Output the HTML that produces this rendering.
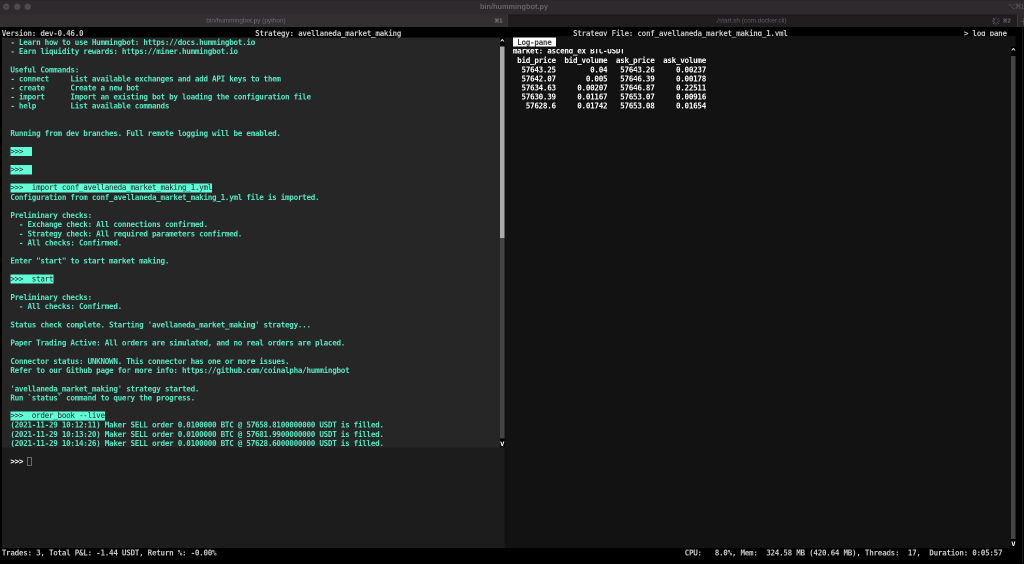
<!DOCTYPE html>
<html lang="en"><head><meta charset="utf-8"><title>bin/hummingbot.py</title>
<style>
html,body{margin:0;padding:0;background:#000;}
body{width:1024px;height:564px;position:relative;overflow:hidden;}
#lay{position:absolute;left:0;top:0;width:2048px;height:1128px;will-change:transform;transform:scale(0.5);transform-origin:0 0;}
.r{position:absolute;}
.t{position:absolute;white-space:pre;font-family:"DejaVu Sans Mono", "Liberation Mono", monospace;font-size:15.2px;line-height:18.23px;height:18.23px;font-weight:bold;letter-spacing:-0.56px;}
.h{color:#c6c6c6;} .o{color:#56e8c3;} .w{color:#ffffff;} .k{color:#262626;font-weight:normal;margin-top:-1px;} .k2{color:#3c3c3c;}
.ui{position:absolute;white-space:pre;font-family:"Liberation Sans","DejaVu Sans",sans-serif;line-height:1.2;}
</style></head>
<body>
<div id="lay">
<div class="r" style="left:0px;top:0px;width:2048px;height:29.2px;background:#2e2a2d;"></div>
<div class="r" style="left:0px;top:0px;width:2048px;height:1px;background:#262326;"></div>
<div class="r" style="left:0px;top:28.6px;width:2048px;height:1.2px;background:#2a262a;"></div>
<div class="r" style="left:0px;top:29.2px;width:1015.4px;height:24.6px;background:#332e32;"></div>
<div class="r" style="left:1015.4px;top:29.2px;width:1019.4px;height:24.6px;background:#201c20;"></div>
<div class="r" style="left:1015.4px;top:28.8px;width:1019.4px;height:1.8px;background:#1a171a;"></div>
<div class="r" style="left:2034.8px;top:29.2px;width:13.2px;height:24.6px;background:#2a262a;"></div>
<div class="r" style="left:1014.6px;top:29.2px;width:1.8px;height:24.6px;background:#3d383d;"></div>
<div class="r" style="left:2034px;top:29.2px;width:1.6px;height:24.6px;background:#3d383d;"></div>
<div class="r" style="left:2040.8px;top:41.8px;width:7.2px;height:1.6px;background:#5e5a60;"></div>
<div class="r" style="left:2045.8px;top:35.8px;width:1.6px;height:13.8px;background:#5e5a60;"></div>
<div class="r" style="left:0px;top:54px;width:2048px;height:1074px;background:#000;"></div>
<div class="r" style="left:6.1px;top:7.3px;width:13.2px;height:13.2px;border-radius:50%;background:#4e4a50"></div>
<div class="r" style="left:27.6px;top:7.3px;width:13.2px;height:13.2px;border-radius:50%;background:#4e4a50"></div>
<div class="r" style="left:49.2px;top:7.3px;width:13.2px;height:13.2px;border-radius:50%;background:#4e4a50"></div>
<div class="r" style="left:11.1px;top:12.3px;width:3.2px;height:3.2px;border-radius:50%;background:#2e2a2d"></div>
<div class="ui" style="left:828px;width:400px;top:5.2px;text-align:center;font-weight:bold;font-size:14.7px;color:#67636a">bin/hummingbot.py</div>
<div class="ui" style="left:292px;width:400px;top:33.2px;text-align:center;font-size:12.8px;color:#6e6a71">bin/hummingbot.py (python)</div>
<div class="ui" style="left:1302px;width:400px;top:33.2px;text-align:center;font-size:12.8px;color:#625e65">./start.sh (com.docker.cli)</div>
<div class="ui" style="left:988.8px;top:35.4px;font-size:10.8px;font-weight:bold;color:#8a868d">&#8984;1</div>
<div class="ui" style="left:2005.6px;top:35.4px;font-size:10.8px;font-weight:bold;color:#726e74">&#8984;2</div>
<div class="ui" style="left:2016px;top:4.8px;font-size:13.2px;letter-spacing:-1.4px;color:#5e5a61">&#8997;&#8984;1</div>
<svg class="r" style="left:1983px;top:33px" width="18" height="18" viewBox="-4.5 -4.5 9 9"><line x1="0" y1="-1.7" x2="0" y2="-4.1" stroke="#8a868c" stroke-width="0.8" stroke-opacity="0.35" transform="rotate(0)"/><line x1="0" y1="-1.7" x2="0" y2="-4.1" stroke="#8a868c" stroke-width="0.8" stroke-opacity="0.42" transform="rotate(45)"/><line x1="0" y1="-1.7" x2="0" y2="-4.1" stroke="#8a868c" stroke-width="0.8" stroke-opacity="0.49" transform="rotate(90)"/><line x1="0" y1="-1.7" x2="0" y2="-4.1" stroke="#8a868c" stroke-width="0.8" stroke-opacity="0.56" transform="rotate(135)"/><line x1="0" y1="-1.7" x2="0" y2="-4.1" stroke="#8a868c" stroke-width="0.8" stroke-opacity="0.63" transform="rotate(180)"/><line x1="0" y1="-1.7" x2="0" y2="-4.1" stroke="#8a868c" stroke-width="0.8" stroke-opacity="0.70" transform="rotate(225)"/><line x1="0" y1="-1.7" x2="0" y2="-4.1" stroke="#8a868c" stroke-width="0.8" stroke-opacity="0.77" transform="rotate(270)"/><line x1="0" y1="-1.7" x2="0" y2="-4.1" stroke="#8a868c" stroke-width="0.8" stroke-opacity="0.84" transform="rotate(315)"/></svg>
<div class="r" style="left:3.5px;top:75.22px;width:996.44px;height:820.26px;background:#262626;"></div>
<div class="r" style="left:3.5px;top:895.48px;width:996.44px;height:200.5px;background:#1c1c1c;"></div>
<div class="r" style="left:1008.52px;top:75.22px;width:1022.22px;height:1020.76px;background:#121212;"></div>
<div class="r" style="left:999.94px;top:75.22px;width:8.58px;height:18.22px;background:#000;"></div>
<div class="r" style="left:999.94px;top:93.46px;width:8.58px;height:382.78px;background:#aaaaaa;"></div>
<div class="r" style="left:999.94px;top:476.24px;width:8.58px;height:401.02px;background:#444444;"></div>
<div class="r" style="left:999.94px;top:877.26px;width:8.58px;height:18.22px;background:#000;"></div>
<div class="r" style="left:999.94px;top:895.48px;width:8.58px;height:200.5px;background:#1c1c1c;"></div>
<div class="r" style="left:2022.14px;top:93.46px;width:8.58px;height:18.22px;background:#000;"></div>
<div class="r" style="left:2022.14px;top:111.68px;width:8.58px;height:966.08px;background:#444444;"></div>
<div class="r" style="left:2022.14px;top:1077.76px;width:8.58px;height:18.22px;background:#000;"></div>
<div class="r" style="left:2030.74px;top:75.22px;width:17.26px;height:1020.76px;background:#000;"></div>
<div class="r" style="left:2044.2px;top:54px;width:1.6px;height:1074px;background:#181818;"></div>
<div class="t w" style="left:999.94px;top:75.82px;">^</div>
<div class="t w" style="left:999.94px;top:877.86px;">v</div>
<div class="t w" style="left:2022.14px;top:94.06px;">^</div>
<div class="t w" style="left:2022.14px;top:1078.36px;">v</div>
<div class="t h" style="left:3.5px;top:57.6px;">Version: dev-0.46.0</div>
<div class="t h" style="left:510.32px;top:57.6px;">Strategy: avellaneda_market_making</div>
<div class="t h" style="left:1145.98px;top:57.6px;">Strategy File: conf_avellaneda_market_making_1.yml</div>
<div class="t h" style="left:1927.66px;top:57.6px;">&gt; log pane</div>
<div class="r" style="left:1112.2px;top:72.4px;width:918.54px;height:3.02px;background:#121212;"></div>
<div class="t h" style="left:3.5px;top:1096.6px;">Trades: 3, Total P&amp;L: -1.44 USDT, Return %: -0.00%</div>
<div class="t h" style="left:1369.3px;top:1096.6px;">CPU:   8.0%, Mem:  324.58 MB (420.64 MB), Threads:  17,  Duration: 0:05:57</div>
<div class="t o" style="left:20.68px;top:75.82px;">- Learn how to use Hummingbot: https://docs.hummingbot.io</div>
<div class="t o" style="left:20.68px;top:94.06px;">- Earn liquidity rewards: https://miner.hummingbot.io</div>
<div class="t o" style="left:20.68px;top:130.52px;">Useful Commands:</div>
<div class="t o" style="left:20.68px;top:148.74px;">- connect     List available exchanges and add API keys to them</div>
<div class="t o" style="left:20.68px;top:166.96px;">- create      Create a new bot</div>
<div class="t o" style="left:20.68px;top:185.2px;">- import      Import an existing bot by loading the configuration file</div>
<div class="t o" style="left:20.68px;top:203.42px;">- help        List available commands</div>
<div class="t o" style="left:20.68px;top:258.1px;">Running from dev branches. Full remote logging will be enabled.</div>
<div class="t o" style="left:20.68px;top:385.7px;">Configuration from conf_avellaneda_market_making_1.yml file is imported.</div>
<div class="t o" style="left:20.68px;top:422.16px;">Preliminary checks:</div>
<div class="t o" style="left:20.68px;top:440.38px;">  - Exchange check: All connections confirmed.</div>
<div class="t o" style="left:20.68px;top:458.62px;">  - Strategy check: All required parameters confirmed.</div>
<div class="t o" style="left:20.68px;top:476.84px;">  - All checks: Confirmed.</div>
<div class="t o" style="left:20.68px;top:513.3px;">Enter "start" to start market making.</div>
<div class="t o" style="left:20.68px;top:586.22px;">Preliminary checks:</div>
<div class="t o" style="left:20.68px;top:604.44px;">  - All checks: Confirmed.</div>
<div class="t o" style="left:20.68px;top:640.9px;">Status check complete. Starting 'avellaneda_market_making' strategy...</div>
<div class="t o" style="left:20.68px;top:677.36px;">Paper Trading Active: All orders are simulated, and no real orders are placed.</div>
<div class="t o" style="left:20.68px;top:713.8px;">Connector status: UNKNOWN. This connector has one or more issues.</div>
<div class="t o" style="left:20.68px;top:732.04px;">Refer to our Github page for more info: https://github.com/coinalpha/hummingbot</div>
<div class="t o" style="left:20.68px;top:768.5px;">'avellaneda_market_making' strategy started.</div>
<div class="t o" style="left:20.68px;top:786.72px;">Run `status` command to query the progress.</div>
<div class="t o" style="left:20.68px;top:841.4px;">(2021-11-29 10:12:11) Maker SELL order 0.0100000 BTC @ 57658.8100000000 USDT is filled.</div>
<div class="t o" style="left:20.68px;top:859.64px;">(2021-11-29 10:13:20) Maker SELL order 0.0100000 BTC @ 57681.9900000000 USDT is filled.</div>
<div class="t o" style="left:20.68px;top:877.86px;">(2021-11-29 10:14:26) Maker SELL order 0.0100000 BTC @ 57628.6000000000 USDT is filled.</div>
<div class="r" style="left:20.68px;top:293.96px;width:42.96px;height:18.22px;background:#5fffd7;"></div>
<div class="t k" style="left:20.68px;top:294.56px;">&gt;&gt;&gt;  </div>
<div class="r" style="left:20.68px;top:330.42px;width:42.96px;height:18.22px;background:#5fffd7;"></div>
<div class="t k" style="left:20.68px;top:331.02px;">&gt;&gt;&gt;  </div>
<div class="r" style="left:20.68px;top:366.88px;width:403.74px;height:18.22px;background:#5fffd7;"></div>
<div class="t k" style="left:20.68px;top:367.48px;">&gt;&gt;&gt;  import conf_avellaneda_market_making_1.yml</div>
<div class="r" style="left:20.68px;top:549.16px;width:85.9px;height:18.22px;background:#5fffd7;"></div>
<div class="t k" style="left:20.68px;top:549.76px;">&gt;&gt;&gt;  start</div>
<div class="r" style="left:20.68px;top:822.58px;width:188.98px;height:18.22px;background:#5fffd7;"></div>
<div class="t k" style="left:20.68px;top:823.18px;">&gt;&gt;&gt;  order_book --live</div>
<div class="t w" style="left:20.68px;top:914.32px;">&gt;&gt;&gt; </div>
<div class="r" style="left:55.24px;top:914.12px;width:8.18px;height:17.42px;box-sizing:border-box;border:1.6px solid #b8b8b8"></div>
<div class="r" style="left:1025.72px;top:75.22px;width:85.9px;height:18.22px;background:#ffffff;"></div>
<div class="t k2" style="left:1025.72px;top:75.82px;"> Log-pane </div>
<div class="t w" style="left:1025.72px;top:94.06px;margin-top:-0.8px">market: ascend_ex BTC-USDT</div>
<div class="r" style="left:1025.72px;top:93.46px;width:257.7px;height:4.2px;background:#121212;"></div>
<div class="t w" style="left:1025.72px;top:112.28px;"> bid_price  bid_volume  ask_price  ask_volume</div>
<div class="t w" style="left:1025.72px;top:130.52px;">  57643.25        0.04   57643.26     0.00237</div>
<div class="t w" style="left:1025.72px;top:148.74px;">  57642.07       0.005   57646.39     0.00178</div>
<div class="t w" style="left:1025.72px;top:166.96px;">  57634.63     0.00207   57646.87     0.22511</div>
<div class="t w" style="left:1025.72px;top:185.2px;">  57630.39     0.01167   57653.07     0.00916</div>
<div class="t w" style="left:1025.72px;top:203.42px;">   57628.6     0.01742   57653.08     0.01654</div>
</div>
</body></html>
